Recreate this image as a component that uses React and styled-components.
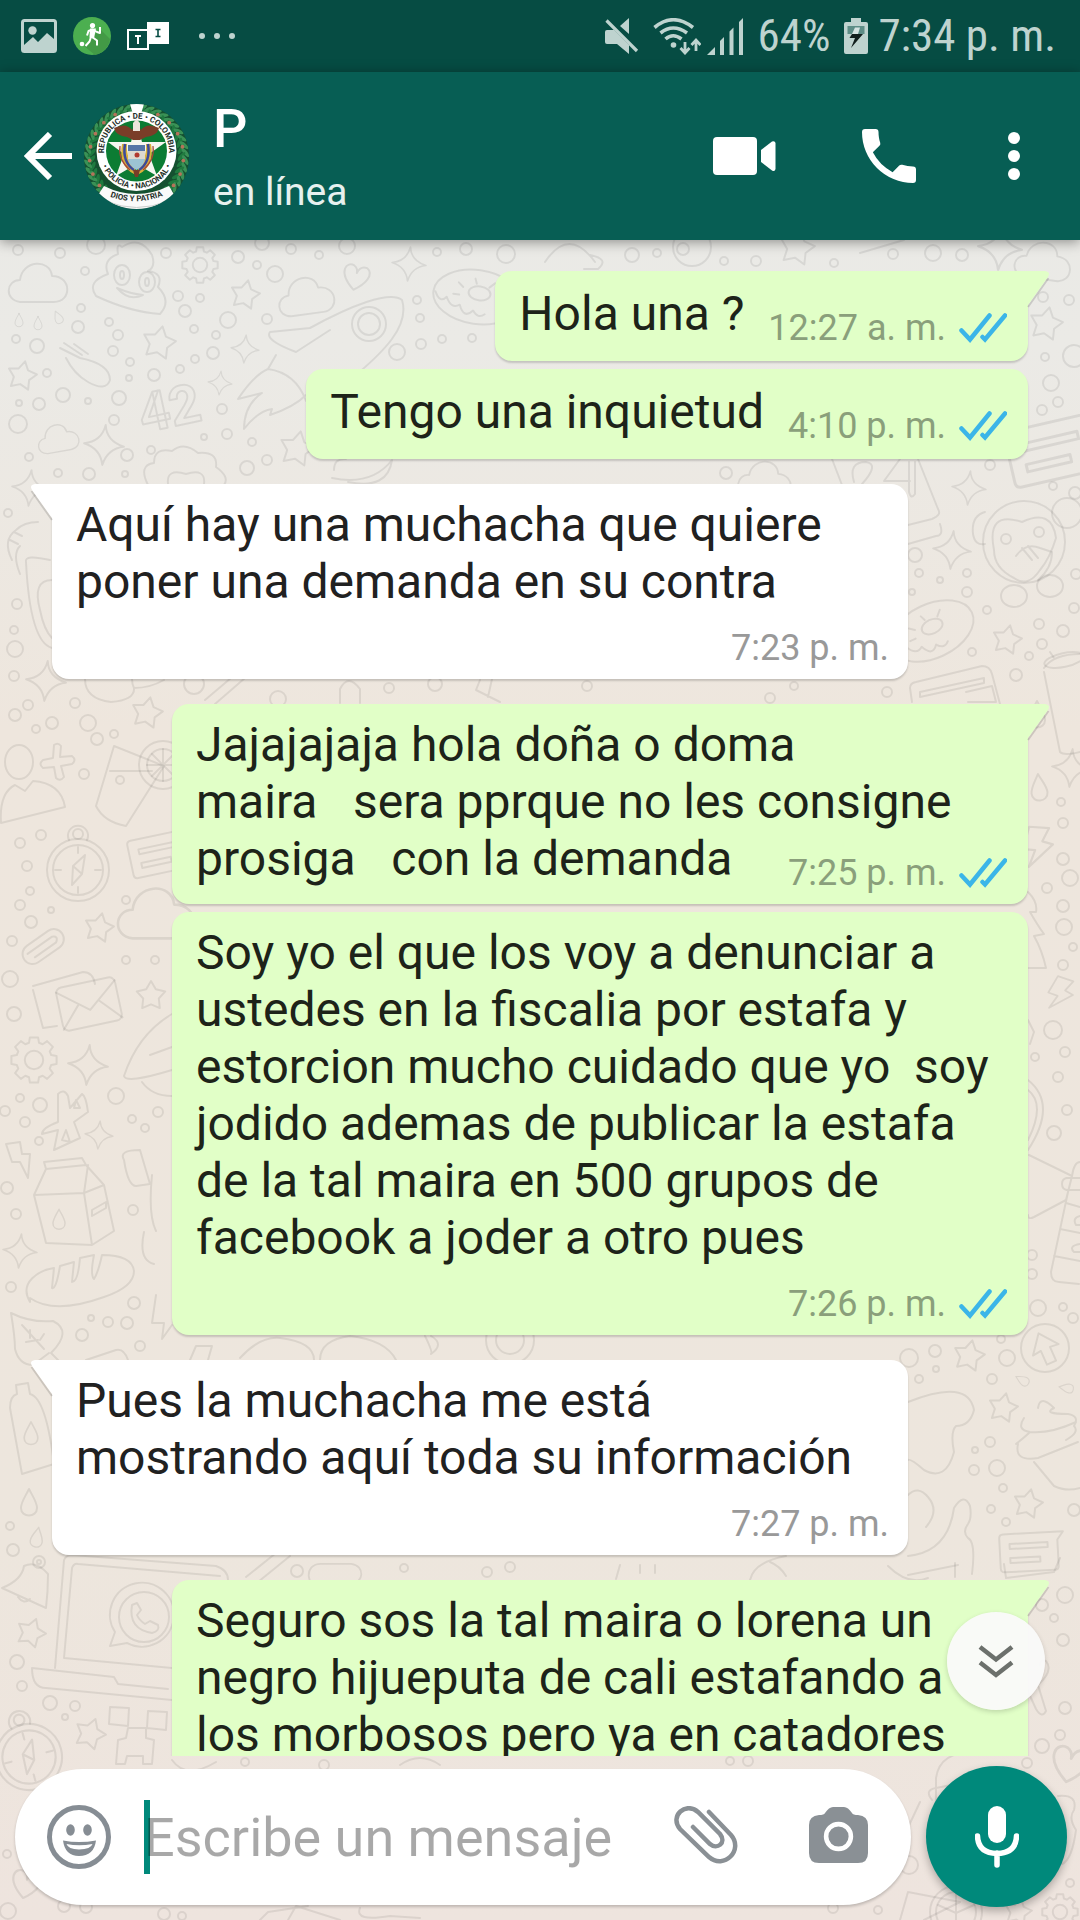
import React from "react";
import styled, { createGlobalStyle, css } from "styled-components";

const GlobalStyle = createGlobalStyle`
  * { box-sizing: border-box; }
  html, body { margin: 0; padding: 0; }
  body { font-family: Roboto, "Noto Sans", sans-serif; }
  button { border: 0; padding: 0; background: none; font: inherit; color: inherit; cursor: pointer; }
  svg { display: block; flex: none; }
`;

const Screen = styled.div`
  position: relative;
  display: flex;
  flex-direction: column;
  height: 100vh;
  overflow: hidden;
  background: linear-gradient(180deg, #e8e9e6 0%, #ebeae6 18%, #eee6dd 38%, #ede6dd 80%, #eee4de 100%);
`;

const Wallpaper = styled.svg`
  position: absolute;
  inset: 0;
  width: 100%;
  height: 100%;
`;

const StatusBar = styled.div`
  position: relative;
  display: flex;
  align-items: center;
  justify-content: space-between;
  height: 72px;
  flex: none;
  padding: 0 24px 0 21px;
  background: #064c43;
  color: #bed3cf;
  font-family: "Roboto Condensed", Roboto, sans-serif;
  font-size: 45px;
  line-height: 54px;
`;

const StatusGroup = styled.div`
  display: flex;
  align-items: center;
  gap: ${(p) => p.$gap}px;
`;

const Header = styled.header`
  position: relative;
  z-index: 1;
  display: flex;
  align-items: center;
  height: 168px;
  flex: none;
  padding: 0 24px;
  background: #075e54;
  color: #fff;
  box-shadow: 0 2px 12px rgba(0, 0, 0, 0.4);
`;

const BackButton = styled.button`
  display: flex;
  align-items: center;
  gap: 12px;
`;

const Contact = styled.div`
  flex: 1;
  padding-left: 24px;
`;

const ContactName = styled.h1`
  margin: 0;
  font-size: 54px;
  font-weight: 500;
  line-height: 64px;
`;

const ContactState = styled.p`
  margin: 0;
  font-size: 39px;
  line-height: 48px;
  padding-top: 7px;
  color: #e6f1ef;
`;

const Actions = styled.div`
  display: flex;
  align-items: center;
  gap: 86px;
  padding-right: 30px;
`;

const IconButton = styled.button`
  display: flex;
  align-items: center;
  justify-content: center;
`;

const Chat = styled.main`
  position: relative;
  flex: 1;
  min-height: 0;
  overflow: hidden;
`;

const Messages = styled.ol`
  display: flex;
  flex-direction: column;
  gap: 8px;
  margin: 0;
  padding: 31px 52px 0;
  list-style: none;
`;

const Bubble = styled.li`
  position: relative;
  display: flex;
  flex-direction: column;
  justify-content: center;
  flex: none;
  align-self: ${(p) => (p.$out ? "flex-end" : "flex-start")};
  max-width: calc(100% - 120px);
  min-height: 90px;
  margin-top: ${(p) => (p.$newGroup ? 17 : 0)}px;
  padding: 12px ${(p) => (p.$out ? 21 : 19)}px 10px 24px;
  border-radius: 17px;
  background: ${(p) => (p.$out ? "#e1ffc7" : "#ffffff")};
  color: ${(p) => (p.$out ? "#1d2319" : "#212121")};
  box-shadow: 0 2px 2px rgba(0, 0, 0, 0.17);
  ${(p) => p.$tail && (p.$out
    ? css`border-top-right-radius: 0;`
    : css`border-top-left-radius: 0;`)}
`;

const Tail = styled.svg`
  position: absolute;
  top: 0;
  ${(p) => (p.$out ? "right: -22px;" : "left: -22px; transform: scaleX(-1);")}
  width: 24px;
  height: 38px;
  fill: ${(p) => (p.$out ? "#e1ffc7" : "#ffffff")};
`;

const MessageText = styled.p`
  display: flow-root;
  margin: 0;
  font-size: 48px;
  line-height: 57px;
  white-space: pre-wrap;
`;

const Meta = styled.span`
  float: right;
  display: flex;
  align-items: center;
  gap: 13px;
  margin: ${(p) => (p.$below ? 17 : 22)}px 0 0 24px;
  font-size: 36px;
  line-height: 42px;
  color: ${(p) => (p.$out ? "#8a9f7b" : "#999999")};
`;

const ScrollButton = styled.button`
  position: absolute;
  right: 35px;
  bottom: 46px;
  display: flex;
  align-items: center;
  justify-content: center;
  width: 98px;
  height: 98px;
  border-radius: 50%;
  background: rgba(250, 250, 250, 0.94);
  box-shadow: 0 2px 5px rgba(0, 0, 0, 0.16);
`;

const Composer = styled.form`
  position: relative;
  display: flex;
  align-items: center;
  gap: 15px;
  flex: none;
  padding: 10px 13px 13px 15px;
`;

const InputPill = styled.div`
  display: flex;
  align-items: center;
  flex: 1;
  min-width: 0;
  height: 136px;
  padding: 0 43px 0 32px;
  border-radius: 68px;
  background: #fff;
  box-shadow: 0 2px 3px rgba(0, 0, 0, 0.2);
`;

const Field = styled.label`
  position: relative;
  display: flex;
  align-items: center;
  flex: 1;
  min-width: 0;
  height: 74px;
  margin-left: 33px;
`;

const Caret = styled.span`
  position: absolute;
  left: 0;
  top: 0;
  width: 6px;
  height: 74px;
  background: #00897b;
`;

const TextInput = styled.input`
  position: relative;
  width: 100%;
  border: 0;
  outline: 0;
  padding: 2px 0 0;
  background: none;
  font: inherit;
  font-size: 54px;
  line-height: 64px;
  color: #212121;
  &::placeholder { color: rgba(0, 0, 0, 0.34); opacity: 1; }
`;

const PillActions = styled.div`
  display: flex;
  align-items: center;
  gap: 71px;
  padding-bottom: 4px;
`;

const MicButton = styled.button`
  display: flex;
  align-items: center;
  justify-content: center;
  width: 141px;
  height: 141px;
  flex: none;
  border-radius: 50%;
  background: #00897b;
  box-shadow: 0 4px 8px rgba(0, 0, 0, 0.28);
`;

/* ---------- wallpaper doodles ---------- */

const starPoints = (r) =>
  Array.from({ length: 10 }, (_, i) => {
    const a = (Math.PI / 5) * i - Math.PI / 2;
    const k = i % 2 ? r * 0.55 : r;
    return `${(Math.cos(a) * k).toFixed(1)},${(Math.sin(a) * k).toFixed(1)}`;
  }).join(" ");

const gearPath = (r) => {
  let d = "";
  for (let i = 0; i < 8; i++) {
    [-0.28, -0.18, 0.18, 0.28].forEach((o, j) => {
      const a = (Math.PI / 4) * i + o;
      const k = j === 1 || j === 2 ? r : r * 0.78;
      d += `${d ? "L" : "M"}${(Math.cos(a) * k).toFixed(1)} ${(Math.sin(a) * k).toFixed(1)}`;
    });
  }
  return d + "Z";
};

const At = ({ x, y, s = 1, a = 0, children }) => (
  <g transform={`translate(${x} ${y}) rotate(${a}) scale(${s})`}>{children}</g>
);

const Star = ({ x, y, r = 15, a = 12 }) => (
  <At x={x} y={y} a={a}><polygon points={starPoints(r)} /></At>
);
const Spark = ({ x, y, r = 17, a = 5 }) => (
  <At x={x} y={y} a={a} s={r / 20}>
    <path d="M0-20Q2-4 20 0Q4 3 0 20Q-3 4-20 0Q-3-3 0-20Z" />
  </At>
);
const Cloud = ({ x, y, s = 1, a = 0 }) => (
  <At x={x} y={y} s={s} a={a}>
    <path d="M-18 18C-34 16-32-4-18-4C-16-24 12-26 14-8C34-8 34 18 16 18Z" />
  </At>
);
const Gear = ({ x, y, r }) => (
  <At x={x} y={y}><path d={gearPath(r)} /><circle r={r * 0.4} /></At>
);
const Heart = ({ x, y, s = 1, a = 12 }) => (
  <At x={x} y={y} s={s} a={a}>
    <path d="M0 13C-20-2-12-14-4-11Q0-9 0-4Q2-12 9-11C18-6 10 6 0 13Z" />
  </At>
);
const Donut = ({ x, y, a = 8 }) => (
  <At x={x} y={y} a={a}>
    <ellipse rx="44" ry="27" /><ellipse cx="2" cy="-4" rx="11" ry="7" />
    <path d="M-42 0q6 12 12 4q6 12 14 6q6 14 14 4q6 8 12 2M-20-12l5 4M-24 0h6M16-16l-5 5M-4-18l2 5" />
  </At>
);
const Drop = ({ x, y, s = 1, a = 0 }) => (
  <At x={x} y={y} s={s} a={a}><path d="M0-13C4-5 8 0 8 6C8 16-8 16-8 6C-8 0-4-5 0-13Z" /></At>
);
const Compass = ({ x, y, r = 31, a = 0 }) => (
  <At x={x} y={y} s={r / 31} a={a}>
    <circle r="31" /><circle r="25" /><circle cy="-36" r="5" /><path d="M-9-30A10 10 0 1 1 9-30" />
    <path d="M7-15L4 4L-6 15L-5-4ZM-5-4L4 4M0-23v6M0 23v-6M-23 0h6M23 0h-6" />
  </At>
);
const Bolt = ({ x, y, s = 1, a = 0 }) => (
  <At x={x} y={y} s={s} a={a}><path d="M-10-16L8-18L4-5L14-4L-4 20L-1 4L-12 5Z" /></At>
);
const Note = ({ x, y, a = 0, s = 1 }) => (
  <At x={x} y={y} a={a} s={s}>
    <path d="M-30-16Q-30-20-26-20H34L28-12V14Q28 18 24 18H-26Q-30 18-30 14Z" />
    <path d="M-20-10H18v5H-20ZM-20 4H10v5H-20Z" />
  </At>
);

const BUBBLES = [
  [18, 250, 5], [60, 253, 5], [96, 245, 9], [85, 271, 4], [166, 253, 5], [238, 257, 6], [257, 265, 4], [275, 274, 8],
  [262, 243, 7], [291, 249, 5], [319, 255, 4], [347, 246, 8], [437, 252, 4], [466, 249, 6], [506, 254, 9],
  [178, 296, 5], [200, 298, 4], [185, 311, 6], [81, 308, 4], [78, 327, 6], [109, 322, 4], [118, 335, 5], [228, 320, 8],
  [267, 319, 5], [194, 329, 4], [216, 335, 4], [213, 353, 6], [37, 346, 7], [16, 339, 4], [113, 351, 5], [130, 362, 4],
  [129, 378, 3], [154, 375, 6], [180, 369, 4], [195, 359, 4], [47, 373, 4], [63, 395, 7], [39, 404, 6], [19, 403, 3],
  [88, 401, 3], [119, 398, 7], [114, 420, 5], [18, 424, 9], [29, 457, 4], [127, 455, 6], [151, 450, 4], [222, 409, 5],
  [227, 434, 5], [204, 437, 3], [252, 442, 4], [267, 460, 5], [247, 468, 7], [89, 474, 6], [58, 473, 4], [125, 474, 3],
  [417, 300, 4], [420, 318, 4], [397, 352, 8], [421, 344, 5], [442, 339, 4], [472, 338, 4], [8, 513, 4],
  [17, 604, 5], [14, 630, 4], [15, 649, 8], [14, 676, 5], [28, 705, 5], [75, 703, 5], [15, 715, 6], [52, 723, 6],
  [88, 723, 8], [36, 729, 4], [97, 739, 6], [114, 734, 4], [84, 774, 5], [120, 780, 4], [20, 843, 5], [41, 835, 5],
  [27, 866, 5], [30, 891, 4], [20, 905, 5], [126, 900, 4], [51, 910, 3], [31, 922, 6], [12, 941, 5], [126, 960, 4],
  [155, 960, 4], [10, 979, 8], [14, 1014, 7], [116, 1096, 8], [40, 1105, 7], [20, 1098, 4], [5, 1111, 5], [25, 1122, 5],
  [158, 1112, 5], [132, 1119, 4], [145, 1128, 4], [39, 1141, 4], [7, 1188, 6], [16, 1214, 5], [133, 1210, 5],
  [11, 1287, 5], [134, 1303, 6], [91, 1318, 3], [108, 1322, 5], [127, 1323, 6], [82, 1335, 6], [140, 1346, 5],
  [10, 1526, 4], [13, 1550, 6], [297, 1571, 6], [404, 1568, 4], [487, 1572, 5], [510, 1567, 5],
  [17, 1662, 7], [22, 1686, 5], [50, 1703, 7], [75, 1706, 5], [65, 1717, 3], [7, 1854, 4], [8, 1911, 8],
  [64, 1906, 6], [86, 1907, 6], [164, 1914, 6], [182, 1916, 4], [245, 1762, 4], [324, 1765, 5], [730, 1761, 4], [748, 1761, 5],
  [632, 255, 7], [657, 253, 4], [724, 261, 4], [756, 261, 5], [834, 263, 4], [893, 254, 5], [933, 253, 8], [962, 255, 6],
  [1043, 297, 5], [1069, 300, 5], [1045, 357, 4], [1074, 356, 11], [1051, 383, 8], [1058, 402, 5], [1042, 410, 5],
  [990, 465, 5], [1053, 486, 4], [1075, 493, 6], [726, 473, 6], [915, 555, 7], [919, 573, 4], [940, 580, 3], [967, 573, 4],
  [967, 592, 5], [912, 592, 3], [1076, 574, 5], [987, 610, 4], [1039, 624, 5], [1063, 631, 6], [1042, 644, 5],
  [972, 652, 4], [1029, 656, 4], [1074, 608, 5], [1016, 675, 6], [587, 686, 5], [794, 686, 4], [770, 698, 5], [887, 692, 5],
  [1061, 802, 4], [1063, 823, 5], [1063, 859, 6], [1070, 878, 8], [1047, 888, 5], [1063, 906, 6], [1064, 927, 8],
  [1073, 947, 4], [1063, 965, 5], [1053, 1030, 9], [1065, 1052, 5], [1035, 1057, 4], [1058, 1077, 5], [1067, 1110, 5],
  [1054, 1133, 7], [1032, 1255, 5], [1032, 1274, 5], [1038, 1308, 8], [1063, 1307, 4], [1073, 1318, 5],
  [1001, 1339, 4], [1007, 1358, 8], [935, 1351, 6], [909, 1358, 9], [936, 1369, 3], [919, 1379, 4], [992, 1379, 5],
  [990, 1442, 5], [975, 1450, 3], [974, 1470, 5], [997, 1468, 8], [1003, 1488, 4], [991, 1509, 4], [1006, 1522, 4], [1074, 1510, 6],
  [1065, 1595, 8], [1042, 1605, 6], [1054, 1618, 4], [1063, 1640, 6], [1065, 1708, 6], [1060, 1735, 5], [1042, 1746, 7],
  [1027, 1763, 5], [909, 1865, 9], [1070, 1883, 4], [878, 1910, 4], [833, 1908, 5],
];

const Doodles = () => (
  <Wallpaper viewBox="0 0 1080 1920" preserveAspectRatio="xMidYMid slice" aria-hidden="true"
    fill="none" stroke="#000" strokeOpacity="0.08" strokeWidth="2" strokeLinejoin="round" strokeLinecap="round">
    {BUBBLES.map(([x, y, r]) => <circle key={`${x}-${y}`} cx={x} cy={y} r={r} />)}
    <Cloud x={38} y={284} />
    <Cloud x={306} y={297} s={0.95} a={-8} />
    <Cloud x={58} y={439} s={0.7} a={-10} />
    <Cloud x={1043} y={262} s={0.95} a={8} />
    <Cloud x={156} y={915} s={1.3} />
    <Cloud x={765} y={480} s={0.9} a={5} />
    <Cloud x={335} y={1580} s={0.9} a={180} />
    <Drop x={19} y={320} s={0.5} /><Drop x={38} y={323} s={0.5} /><Drop x={58} y={317} s={0.5} a={-25} />
    <path d="M122 247q18-12 30 8q4 12-4 16q16 2 10 16q14 14 2 27q-30-2-64-18q-10-14 12-22q-6-14 10-20q-2-12 4-7Z" />
    <ellipse cx="122" cy="275" rx="8" ry="10" /><ellipse cx="147" cy="282" rx="8" ry="10" />
    <ellipse cx="122" cy="275" rx="2" ry="4" /><ellipse cx="147" cy="282" rx="2" ry="4" />
    <path d="M117 288q12 14 26 7q-12-1-26-7Z" />
    <Gear x={200} y={265} r={18} /><Gear x={34} y={1060} r={23} /><Gear x={1060} y={1912} r={18} />
    <Star x={245} y={295} /><Star x={159} y={343} r={17} /><Star x={22} y={376} /><Star x={297} y={449} r={18} />
    <Star x={797} y={248} r={18} /><Star x={1046} y={324} r={17} /><Star x={1007} y={640} /><Star x={147} y={713} r={16} />
    <Star x={99} y={928} /><Star x={151} y={996} r={15} a={0} /><Star x={969} y={1356} r={16} /><Star x={1003} y={1408} />
    <Star x={1028} y={1504} /><Star x={31} y={1633} r={15} a={20} /><Star x={90} y={1734} r={16} a={20} /><Star x={1018} y={1912} r={14} />
    <Spark x={409} y={264} /><Spark x={245} y={349} r={14} /><Spark x={220} y={383} r={12} /><Spark x={104} y={445} r={20} />
    <Spark x={30} y={488} r={18} /><Spark x={46} y={681} r={20} /><Spark x={88} y={1065} r={20} /><Spark x={99} y={1135} r={14} />
    <Spark x={20} y={1251} /><Spark x={969} y={488} /><Spark x={952} y={550} r={19} /><Spark x={1071} y={768} r={19} />
    <Spark x={1000} y={248} r={22} />
    <Heart x={356} y={277} /><Heart x={26} y={1884} s={1.1} /><Heart x={1070} y={1764} s={1.4} />
    <Donut x={477} y={297} /><Donut x={932} y={631} a={-25} />
    <path d="M310 328C350 306 390 290 402 300C410 326 384 352 350 380M310 328l-40 4q-6 8 26 20l34-22M276 355l-8 14q28 4 38 32M268 369q-14 6-30 30l24-6q-18 12-18 36q14-18 28-20l-2 6q24-8 36-20" />
    <circle cx="369" cy="324" r="17" /><circle cx="369" cy="324" r="11" />
    <path d="M60 348l20 10q30 6 30 22q-4 12-22 2q-14-8-22-24M64 343l18 12M74 344l14 10" />
    <text x="143" y="433" fontSize="54" fontWeight="700" fontFamily="Roboto, sans-serif" transform="rotate(-12 143 433)">42</text>
    <path d="M148 485q-10-20 6-22q0-16 18-12q12-10 26 2q20-2 18 14q14 10 8 18M168 484q-2-16 18-10q20-6 18 10M334 470q0-12 12-11M332 478q40 8 60-18q-4 30-44 22" />
    <path d="M12 560q-10-20 4-30q8-8 22-8M20 574q-8-20 0-28M10 540l8 4M14 532l8 4M26 562q-2-8 24-2M26 562q4 80 26 86M52 580q-20 0-12 30q4 20 12 28" />
    <path d="M85 679q0 20 26 23q24-2 23-14q-2-4-2-9M134 688q16 0 30-8M205 700l26-22M215 704l30-26M340 703v-14q8-16 20 0v14M480 680l-4 10l24 12M492 679l-4 18" />
    <circle cx="194" cy="684" r="10" /><circle cx="278" cy="699" r="8" /><circle cx="389" cy="688" r="5" /><circle cx="435" cy="684" r="7" />
    <ellipse cx="19" cy="762" rx="14" ry="17" />
    <path d="M1 823q-2-30 14-38l10 6l8-10q28 2 32 26ZM54 745q4-3 7 1l-1 11l12-1q5 4 0 8l-11 2l3 11q-4 5-8 1l-2-11l-11 1q-5-4 0-8l10-2Z" />
    <path d="M114 746l-18 60q8 16 30 20l38-60ZM110 771h42" />
    <circle cx="163" cy="765" r="24" /><circle cx="163" cy="765" r="16" /><path d="M163 749v32M147 765h32M152 754l22 22M174 754l-22 22" />
    <Compass x={78} y={870} /><Compass x={29} y={1757} r={33} a={-15} />
    <Note x={160} y={855} a={-12} />
    <At x={44} y={946} a={-35}><rect x="-24" y="-10" width="46" height="20" rx="10" /><path d="M-18-3H12q6 3 0 7H-14" /></At>
    <path d="M33 986l50-14q10 0 12 12M33 990l10 38l14-2" />
    <At x={89} y={1004} a={-12}><rect x="-30" y="-22" width="60" height="44" rx="6" /><path d="M-30-18L0 6L30-18M-30 20L-10-2M30 20L10-2" /></At>
    <path d="M172 1014q-34 20-48 62q2 8 48-6M142 1082q10 14 30 14M150 1055l22-8" />
    <path d="M58 1094q6-6 10 2l2 12l12-14q4 2 6 18l-14 10l6 16l-26 12l4-20l-16 4q0-6 16-12ZM62 1140l8 2l-4-12ZM74 1108l6 0l-4-8Z" />
    <path d="M6 1144l14-2l2 12l8 0l-2 24l-8-16l-8 0Z" />
    <path d="M34 1195l12-26l40-4l18 20l10 46l-22 14l-46-2ZM34 1195l50-2l20-8M84 1193l8 52M84 1193l4-28M46 1169l-2-7l38-4l4 7M92 1210l14-8v6l-14 8Z" />
    <Drop x={59} y={1219} s={0.75} />
    <path d="M30 1302c-12-20 10-32 24-34l-2 20q4 2 8-22l14-4l-2 20q6 0 8-24l14-3q-4 20 0 24q4-6 8-24q30 0 32 16q0 16-30 26q-50 18-74 1Z" />
    <path d="M11 1313q20 10 42 8q20 10-2 32l10 10M11 1313q4 24 4 36q4 16 18 16l16-12M22 1325l22 24M30 1330l0 8M40 1340l4-6M26 1342l12-2" />
    <path d="M17 1394l-1-9l12-2l2 11q16 4 24 70l-32 10l-12-66q0-12 7-14Z" />
    <Drop x={31} y={1433} s={0.85} /><Drop x={29} y={1502} s={1} /><Drop x={37} y={1537} s={0.75} a={10} />
    <path d="M124 1160q-6-10 16-10l10 34l-14 2q-8 0-12-26M152 1175q-4 40 4 56M144 1232q-6 28 10 32M156 1295l-4 28l12 0l-2 16l10-14" />
    <path d="M2 1588q20-8 22-22q12-6 24 8q0 18-2 34ZM18 1597q6 8 12 2" /><circle cx="39" cy="1562" r="6" /><circle cx="39" cy="1562" r="2" />
    <path d="M55 1668L64 1560Q66 1555 72 1555L216 1566Q228 1570 228 1580M64 1658L72 1568Q74 1563 78 1564L220 1576M64 1658L172 1668M32 1668L114 1677L118 1684L168 1689M32 1668Q32 1688 46 1688L172 1700" />
    <path d="M115 1632a32 32 0 1 1 12 11l-17 3ZM132 1605q-4 24 20 28q8-2 6-8l-8-4l-5 3q-6-4-8-9l4-5l-4-7Z" /><circle cx="144" cy="1617" r="25" />
    <path d="M110 1707l19 1l-1 18l-19-2ZM148 1711l19 1l-1 18l-19-2ZM128 1728h18v10l8 2l-2 24h-9v-8h-16l-2 8h-9l2-24l8-2Z" />
    <path d="M172 1760q14 20 44 2M260 1920l8-8l40-6M400 1765q20-14 40 0M420 1918l-30-2q-36 6-30-8M288 1920l8-14l44 14" />
    <Note x={1054} y={452} a={-13} s={1.5} />
    <path d="M832 459l10 26M918 459l20 50q4 6-6 10l-24 6M908 544l28-8q8 0 4-12" />
    <path d="M854 482q-6-20 12-20q14 2-4 22M900 459l-16 22h26M915 462v32q-4 6-6-2v-30" />
    <circle cx="1024" cy="542" r="41" /><circle cx="1067" cy="513" r="15" /><path d="M985 512q-14 4-12 22q2 12 12 10M994 550q-8-40 28-28q30-14 34 16q-6 20-16 32q-12 18-26 8q-20-10-20-28Z" />
    <circle cx="1006" cy="539" r="5" /><circle cx="1039" cy="532" r="5" /><path d="M1016 556q10-14 24-8l12 4q0 16-14 28M1022 548l10 12M1028 546l10 12" />
    <ellipse cx="1014" cy="596" rx="13" ry="11" /><ellipse cx="1050" cy="586" rx="13" ry="11" />
    <path d="M912 702l-2-14q0-5 6-6l66-16q8 0 10 8l8 30M920 692l64-14v5l-64 14ZM966 692l26-6l4 16h-28M1044 672l16 80q4 4 20 0M1044 668q10-14 36-14M1050 652l4 6" />
    <ellipse cx="1064" cy="660" rx="20" ry="7" transform="rotate(-12 1064 660)" />
    <Drop x={1037} y={714} /><Drop x={1039} y={787} a={-5} />
    <Bolt x={1037} y={846} s={1.1} a={10} /><Bolt x={1060} y={993} s={0.9} a={25} />
    <path d="M1028 892q10 10 8 20l-6 0q8 14 14 22l-10 2q8 14 12 32h-18M1028 1020l6 12l-4 12M1028 1080q30 24 0 70M1028 1090q18 14 0 50" />
    <path d="M1029 1155L1072 1176L1066 1200L1034 1217Q1028 1220 1028 1215M1072 1176q2-14 8-14M1066 1178h14M1066 1190h14M1062 1184q0-6 6-6M1062 1184q0 6 6 6M1068 1192L1051 1272q0 10 8 10l20 2M1066 1203l14 4M1060 1229l20 4M1054 1256l26 5M1080 1216q-8 2-4 9h4M1080 1244q-12 2-6 8h6" />
    <circle cx="1045" cy="1348" r="24" />
    <At x={1045} y={1348} a={-24}><path d="M0-16L14 2L5 1V16H-5V1L-14 2Z" /></At>
    <Drop x={1022} y={1380} s={0.55} a={-60} /><Drop x={1066} y={1388} s={0.55} a={-80} />
    <path d="M908 1402q60-24 66 8q-4 16-18 16q-6 6-2 26q-8 30-30 18q-14-12-16-10M908 1495q10-10 20 2q12 14-2 30M908 1556q40-4 46-48q10-16 16-2q2 12-2 18q-6 8 0 14q8 4 4 36M908 1575l50-10" />
    <path d="M1038 1408q2-14 16 0q-12 6 14 6q12 2 6 12q6 6-8 14M1024 1418q-8 12 6 14q20 2 46-10M1018 1444q-4 18 20 14l40-16M1016 1444q10-8 14-12M1034 1462l20 24q12 6 26 2" />
    <Note x={1030} y={1553} a={-3} />
    <path d="M1040 1665q0-6 6-4q8 10-8 24l8 26q-4 8-10-2l-10-22M936 1808v-30q4-30 50-26M932 1800q-8-10 4-12l40-8M920 1802l-16 34M1058 1796q20-2 16 14q-6 8 2 20q-4 30-14 34M908 1892l52 10l-36 18M908 1892l-8 28" />
    <circle cx="956" cy="1912" r="26" /><circle cx="956" cy="1912" r="20" /><path d="M956 1892v28M938 1905l18 8l18-8" />
    <circle cx="692" cy="247" r="19" /><circle cx="683" cy="249" r="6" /><path d="M545 262q24-36 50 0M590 255q20 4 8 14h-14M860 253l44-13" />
    <circle cx="510" cy="1340" r="24" /><circle cx="510" cy="1340" r="14" /><path d="M240 1358q20-22 40-20q34 4 34 22M320 1360q0-20 30-24q36 4 46 24M190 1360l6-14h16l-4 14M425 1336q8 16 6 18q14-10 0-18M86 1360l30-10q8-2 12 10" />
    <path d="M246 1577l30-24M258 1582l32-26M620 1565l-4 14M640 1565v8M655 1565v8M750 1580q4-18 36-24M770 1562q10 4 16 14M888 1566q20 20 40 12M955 1577v-14M1004 1564l2 14l48-6l6-14" />
  </Wallpaper>
);

/* ---------- icons ---------- */

const ImageIcon = () => (
  <svg width="36" height="34" viewBox="0 0 36 34">
    <rect x="1.5" y="1.5" width="33" height="31" rx="2" fill="none" stroke="currentColor" strokeWidth="3" />
    <circle cx="11.500" cy="11.500" r="4.200" fill="currentColor" />
    <path d="M3 26L12 18L17 23L26 14L33 20V31H3Z" fill="currentColor" />
  </svg>
);
const BallIcon = () => (
  <svg width="38" height="38" viewBox="0 0 38 38">
    <circle cx="19" cy="19" r="19" fill="#4caf50" />
    <path d="M27 12L37 22A19 19 0 0 1 22 38L11 29Z" fill="#439a46" />
    <circle cx="19.500" cy="8.500" r="2.600" fill="#fff" /><circle cx="9" cy="27" r="2.300" fill="#fff" />
    <path d="M17 11.500h6l-2 10l-4.500-1Z" fill="#fff" />
    <path d="M14 18.500l1.500-4.500l4-1.500l4.500 2.500l3 1v-6M19 20l5 3.500v5M18 20l-1.500 4.500l-4 4.500" fill="none" stroke="#fff" strokeWidth="2" strokeLinejoin="round" />
  </svg>
);
const TextTilesIcon = () => (
  <svg width="42" height="28" viewBox="0 0 42 28">
    <rect x="1" y="8" width="20" height="19" fill="#064c43" stroke="#fff" strokeWidth="2" />
    <rect x="20" y="0" width="22" height="22" fill="#fff" />
    <path d="M8 14h6M11 13.500V22" fill="none" stroke="#fff" strokeWidth="2" />
    <path d="M28.500 7.500h5M28.500 14.500h5M31 7.500v7" fill="none" stroke="#064c43" strokeWidth="1.600" />
  </svg>
);
const MoreDotsIcon = () => (
  <svg width="37" height="8" viewBox="0 0 37 8" fill="currentColor">
    <circle cx="3" cy="4" r="3" /><circle cx="18" cy="4" r="3" /><circle cx="33" cy="4" r="3" />
  </svg>
);
const MuteIcon = () => (
  <svg width="34" height="36" viewBox="0 0 34 36">
    <path d="M2 12H9L24 27V36L12 26H2Q0 26 0 24V14Q0 12 2 12ZM24 0V16L15 8Z" fill="currentColor" />
    <path d="M1.500 2.500L32 33" stroke="currentColor" strokeWidth="3.200" />
  </svg>
);
const WifiIcon = () => (
  <svg width="48" height="37" viewBox="0 0 48 37" fill="none" stroke="currentColor" strokeWidth="3.600">
    <path d="M1.500 9.500Q20-6 40 9.500M7.500 15Q20 5 34 15M12.500 21Q20 14.500 28.500 21" />
    <circle cx="20.500" cy="27" r="2.800" fill="currentColor" stroke="none" />
    <path d="M32 24v11M27.500 30l4.500 5l4.500-5M43 33V22M38.500 27l4.500-5l4.500 5" strokeWidth="2.800" />
  </svg>
);
const SignalIcon = () => (
  <svg width="36" height="37" viewBox="0 0 36 37" fill="currentColor">
    <path d="M0 37L8 29V37ZM13 23l4-4V37h-4ZM22.500 13.500l4-4V37h-4ZM32 4l4-4V37h-4Z" />
  </svg>
);
const BatteryIcon = () => (
  <svg width="24" height="36" viewBox="0 0 24 36">
    <path d="M7 0H17V4H22Q24 4 24 6V34Q24 36 22 36H2Q0 36 0 34V6Q0 4 2 4H7Z" fill="currentColor" />
    <rect x="3.500" y="8" width="17" height="8" fill="#5d8d86" />
    <path d="M11 9.500H16L14 16H8Z" fill="#d5e3e1" />
    <path d="M8 16H19L7 30L11 20H5.500Z" fill="#111f1d" />
  </svg>
);
const BackIcon = () => (
  <svg width="48" height="48" viewBox="0 0 48 48" fill="none" stroke="#fff" strokeWidth="6">
    <path d="M26 2L4 24L26 46M4 24H48" />
  </svg>
);
const VideoIcon = () => (
  <svg width="63" height="38" viewBox="0 0 63 38" fill="#fff">
    <rect width="44" height="38" rx="4" />
    <path d="M48 13L59 4.500Q62 3.500 62.500 6V32Q62 35 59 33.500L48 25Z" />
  </svg>
);
const PhoneIcon = () => (
  <svg width="54" height="54" viewBox="0 0 18 18" fill="#fff">
    <path d="M3.620 7.790a15.150 15.150 0 0 0 6.590 6.590l2.200-2.200a1 1 0 0 1 1.020-.24 11.400 11.400 0 0 0 3.570.57 1 1 0 0 1 1 1V17a1 1 0 0 1-1 1A17 17 0 0 1 0 1a1 1 0 0 1 1-1h3.500a1 1 0 0 1 1 1c0 1.250.2 2.450.57 3.570a1 1 0 0 1-.25 1.020z" />
  </svg>
);
const MenuIcon = () => (
  <svg width="24" height="48" viewBox="0 0 24 48" fill="#fff">
    <circle cx="12" cy="6" r="6" /><circle cx="12" cy="24" r="6" /><circle cx="12" cy="42" r="6" />
  </svg>
);
const TicksIcon = () => (
  <svg width="48" height="31" viewBox="0 0 48 31" fill="none" stroke="#3bb5e8" strokeWidth="4.500" strokeLinecap="round" aria-label="Leído" role="img">
    <path d="M2.500 17.500L11 26.500L30.500 2.500M23.500 24L26 26.500L46 2.500" />
  </svg>
);
const ChevronsIcon = () => (
  <svg width="36" height="34" viewBox="0 0 36 34" fill="none" stroke="#6c706c" strokeWidth="4.500">
    <path d="M2 3L18 15.500L34 3M2 18.500L18 31L34 18.500" />
  </svg>
);
const EmojiIcon = () => (
  <svg width="64" height="64" viewBox="0 0 64 64">
    <circle cx="32" cy="32" r="29.500" fill="none" stroke="#868d94" strokeWidth="5" />
    <ellipse cx="23.500" cy="25" rx="4.300" ry="5.700" fill="#868d94" /><ellipse cx="40.500" cy="25" rx="4.300" ry="5.700" fill="#868d94" />
    <path d="M16 35.500Q32 38.500 49 35.500Q47 51 32 51Q18 51 16 35.500Z" fill="#868d94" />
    <path d="M19.500 39Q32 41.500 45.500 39Q44 44 32 44.500Q21 44 19.500 39Z" fill="#fff" />
  </svg>
);
const ClipIcon = () => (
  <svg width="64" height="58" viewBox="0 0 64 58" fill="none" stroke="#8a9095" strokeWidth="4.500" strokeLinecap="round">
    <path d="M35 6L57 29C70 44 50 64 35 51L6 23C-5 10 12-5 24 6L46 28C53 37 43 44 36 38L19 21" />
  </svg>
);
const CameraIcon = () => (
  <svg width="59" height="56" viewBox="0 0 59 56">
    <path d="M24 0H35Q39 0 43 6Q44 8 49 8Q59 9 59 18V46Q59 56 49 56H10Q0 56 0 46V18Q0 9 10 8Q15 8 16 6Q20 0 24 0Z" fill="#8a9095" />
    <circle cx="29.500" cy="29.500" r="12.400" fill="#8a9095" stroke="#fff" strokeWidth="4.600" />
  </svg>
);
const MicIcon = () => (
  <svg width="44" height="62" viewBox="0 0 44 62">
    <rect x="13" y="0" width="18" height="37" rx="9" fill="#fff" />
    <path d="M2.500 30Q3 47 22 47.500Q41 47 41.500 30M22 47V59" fill="none" stroke="#fff" strokeWidth="5.500" strokeLinecap="round" />
  </svg>
);

const onWreath = (deg, r) => {
  const rad = (deg * Math.PI) / 180;
  return [52.5 + Math.cos(rad) * r, 52.5 + Math.sin(rad) * r];
};

const Avatar = () => {
  const leaves = Array.from({ length: 64 }, (_, i) => {
    const a = 132 + (i * 276) / 63;
    const [x, y] = onWreath(a, i % 2 ? 49 : 45);
    return (
      <ellipse key={i} cx={x} cy={y} rx="5.500" ry="2"
        transform={`rotate(${a + (i % 2 ? 55 : -50)} ${x} ${y})`} fill={i % 2 ? "#3a9156" : "#1f7a3f"} />
    );
  });
  const berries = [142, 158, 175, 192, 209, 226, 243, 297, 314, 331, 348, 5, 22, 38].map((a) => {
    const [x, y] = onWreath(a, 47);
    return <circle key={a} cx={x} cy={y} r="1.900" fill="#b5735a" />;
  });
  return (
    <svg width="105" height="105" viewBox="0 0 105 105" role="img" aria-label="Foto de perfil">
      <defs>
        <clipPath id="disc"><circle cx="52.500" cy="52.500" r="52.500" /></clipPath>
        <path id="arcTop" d="M23.100 60.900A32.500 32.500 0 1 1 81.900 60.900" />
        <path id="arcBottom" d="M16.500 57.500A37.500 37.500 0 0 0 88.500 57.500" />
        <path id="arcRibbon" d="M22 91Q52.500 104 83 90" />
      </defs>
      <g clipPath="url(#disc)">
        <rect width="105" height="105" fill="#155030" />
        {leaves}{berries}
        <path d="M46 0H60L57 10H49Z" fill="#fff" />
        <circle cx="52.500" cy="47" r="40" fill="#fff" />
        <circle cx="52.500" cy="47" r="30.500" fill="#0c7c33" />
        <path d="M52.500 17L58 38H82L65 50L73 72L52.500 60L32 72L40 50L24 38H47Z" fill="#f5f6f0" />
        <path d="M30 24Q42 18 48 26L52.500 18L57 26Q63 18 75 24Q73 32 62 33L56 36H49L43 33Q32 32 30 24Z" fill="#7a3d28" />
        <path d="M49 19L52.500 15L56 19V27H49Z" fill="#ece6dc" />
        <path d="M38 40Q34 62 50 70L52 62Q42 56 43 40Z" fill="#d9b13b" />
        <path d="M67 40Q71 62 55 70L53 62Q63 56 62 40Z" fill="#d9b13b" />
        <path d="M41 40Q38 58 50 66M64 40Q67 58 55 66" fill="none" stroke="#3b4a9c" strokeWidth="2.500" />
        <path d="M36 42Q34 56 46 66M69 42Q71 56 59 66" fill="none" stroke="#a8453a" strokeWidth="1.200" />
        <path d="M44 41H61V55Q60 62 52.500 66Q45 62 44 55Z" fill="#9cc4d4" />
        <path d="M44 41H61V47H44Z" fill="#5576a8" /><path d="M44 47H61V55H44Z" fill="#dcd9d0" />
        <circle cx="53" cy="51" r="2.500" fill="#b1382e" /><path d="M49 66h7l-2 7h-3Z" fill="#7a3d28" />
        <path d="M20 82Q52 98 85 82L92 94Q72 108 52 106Q32 108 12 94Z" fill="#fafafa" />
        <path d="M22 97Q52 110 84 97" fill="none" stroke="#c9cccb" strokeWidth="1" />
      </g>
      <g fontFamily="Roboto, sans-serif" fontWeight="700" fontSize="8" fill="#26302a" textAnchor="middle">
        <text><textPath href="#arcTop" startOffset="50%">REPUBLICA • DE • COLOMBIA</textPath></text>
        <text><textPath href="#arcBottom" startOffset="50%">• POLICIA • NACIONAL •</textPath></text>
        <text><textPath href="#arcRibbon" startOffset="50%">DIOS Y PATRIA</textPath></text>
      </g>
    </svg>
  );
};

/* ---------- data ---------- */

const MESSAGES = [
  { out: true, tail: true, text: "Hola una ?", time: "12:27 a. m." },
  { out: true, text: "Tengo una inquietud", time: "4:10 p. m." },
  { tail: true, newGroup: true, below: true, text: "Aquí hay una muchacha que quiere poner una demanda en su contra", time: "7:23 p. m." },
  { out: true, tail: true, newGroup: true, text: "Jajajajaja hola doña o doma\nmaira   sera pprque no les consigne\nprosiga   con la demanda", time: "7:25 p. m." },
  { out: true, below: true, text: "Soy yo el que los voy a denunciar a ustedes en la fiscalia por estafa y estorcion mucho cuidado que yo  soy jodido ademas de publicar la estafa de la tal maira en 500 grupos de facebook a joder a otro pues", time: "7:26 p. m." },
  { tail: true, newGroup: true, below: true, text: "Pues la muchacha me está mostrando aquí toda su información", time: "7:27 p. m." },
  { out: true, tail: true, newGroup: true, text: "Seguro sos la tal maira o lorena un negro hijueputa de cali estafando a los morbosos pero ya en catadores" },
];

const FullBubble = styled(Bubble)`
  width: calc(100% - 120px);
`;

const Message = ({ out, tail, newGroup, below, text, time }) => {
  const Box = text.includes("\n") ? FullBubble : Bubble;
  return (
    <Box $out={out} $tail={tail} $newGroup={newGroup}>
      {tail && (
        <Tail $out={out} viewBox="0 0 24 38" aria-hidden="true">
          <path d="M2 36L22.500 7" fill="none" stroke="#000" strokeOpacity="0.14" strokeWidth="2" />
          <path d="M0 0H19Q25 1 22 6L2 34H0Z" />
        </Tail>
      )}
      <MessageText>
        {text}
        {time && (
          <Meta $out={out} $below={below}>
            <time>{time}</time>
            {out && <TicksIcon />}
          </Meta>
        )}
      </MessageText>
    </Box>
  );
};

export default function App() {
  return (
    <Screen>
      <GlobalStyle />
      <Doodles />
      <StatusBar>
        <StatusGroup $gap={30}>
          <StatusGroup $gap={16}>
            <ImageIcon />
            <BallIcon />
            <TextTilesIcon />
          </StatusGroup>
          <MoreDotsIcon />
        </StatusGroup>
        <StatusGroup $gap={14}>
          <MuteIcon />
          <StatusGroup $gap={6}>
            <WifiIcon />
            <SignalIcon />
          </StatusGroup>
          <span>64%</span>
          <StatusGroup $gap={10}>
            <BatteryIcon />
            <time>7:34 p. m.</time>
          </StatusGroup>
        </StatusGroup>
      </StatusBar>
      <Header>
        <BackButton type="button" aria-label="Atrás">
          <BackIcon />
          <Avatar />
        </BackButton>
        <Contact>
          <ContactName>P</ContactName>
          <ContactState>en línea</ContactState>
        </Contact>
        <Actions>
          <IconButton type="button" aria-label="Videollamada"><VideoIcon /></IconButton>
          <IconButton type="button" aria-label="Llamar"><PhoneIcon /></IconButton>
          <IconButton type="button" aria-label="Más opciones"><MenuIcon /></IconButton>
        </Actions>
      </Header>
      <Chat>
        <Messages>
          {MESSAGES.map((m) => <Message key={m.text} {...m} />)}
        </Messages>
        <ScrollButton type="button" aria-label="Ir al final"><ChevronsIcon /></ScrollButton>
      </Chat>
      <Composer>
        <InputPill>
          <IconButton type="button" aria-label="Emojis"><EmojiIcon /></IconButton>
          <Field>
            <Caret />
            <TextInput type="text" placeholder="Escribe un mensaje" aria-label="Escribe un mensaje" />
          </Field>
          <PillActions>
            <IconButton type="button" aria-label="Adjuntar"><ClipIcon /></IconButton>
            <IconButton type="button" aria-label="Cámara"><CameraIcon /></IconButton>
          </PillActions>
        </InputPill>
        <MicButton type="button" aria-label="Mensaje de voz"><MicIcon /></MicButton>
      </Composer>
    </Screen>
  );
}
